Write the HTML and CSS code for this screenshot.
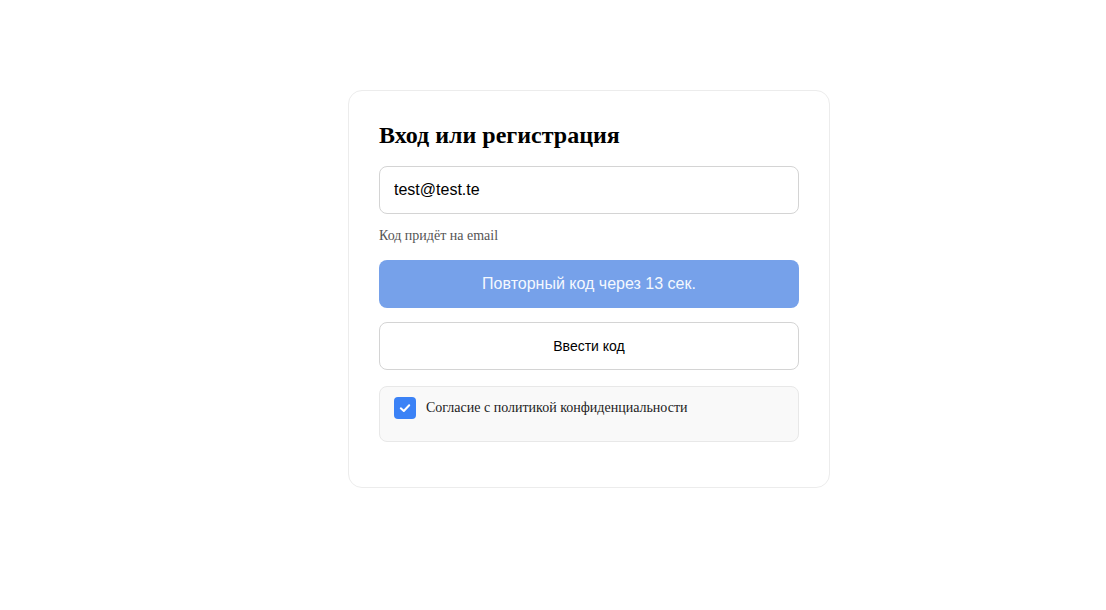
FILE: index.html
```html
<!DOCTYPE html>
<html lang="ru">
<head>
<meta charset="utf-8">
<link rel="stylesheet" href="styles.css">
</head>
<body>
<div class="page">
  <div class="card">
    <h1 class="title">Вход или регистрация</h1>
    <input class="field" type="text" value="test@test.te">
    <p class="hint">Код придёт на email</p>
    <button class="btn btn-primary" disabled>Повторный код через 13 сек.</button>
    <button class="btn btn-secondary">Ввести код</button>
    <label class="consent">
      <span class="check">
        <svg width="14" height="14" viewBox="0 0 14 14"><path d="M2.8 7.3 L5.8 10 L11.2 4.2" fill="none" stroke="#fff" stroke-width="2" stroke-linecap="round" stroke-linejoin="round"/></svg>
      </span>
      <span class="consent-text">Согласие с политикой конфиденциальности</span>
    </label>
  </div>
</div>
</body>
</html>
```

FILE: styles.css
```css
html, body {
  margin: 0;
  padding: 0;
  background: #ffffff;
}

.page {
  padding: 90px 0 0 348px;
}

.card {
  width: 420px;
  padding: 30px;
  border: 1px solid #ececec;
  border-radius: 14px;
  background: #fff;
  font-family: "Liberation Serif", "Times New Roman", serif;
  display: flex;
  flex-direction: column;
}

.title {
  margin: 0 0 17px;
  font-size: 24px;
  font-weight: bold;
  line-height: 28px;
  color: #000;
}

.field {
  box-sizing: border-box;
  width: 420px;
  height: 48px;
  margin: 0;
  padding: 0 14px;
  border: 1px solid #d4d4d4;
  border-radius: 8px;
  font-family: "Liberation Sans", Arial, sans-serif;
  font-size: 16px;
  color: #000;
  outline: none;
}

.hint {
  margin: 14px 0 16px;
  font-size: 14px;
  line-height: 16px;
  color: #555;
}

.btn {
  box-sizing: border-box;
  width: 420px;
  height: 48px;
  margin: 0;
  border-radius: 8px;
  font-family: "Liberation Sans", Arial, sans-serif;
  cursor: pointer;
}

.btn-primary {
  border: none;
  background: #76a1ea;
  color: #f4f8fe;
  font-size: 16px;
}

.btn-secondary {
  margin-top: 14px;
  border: 1px solid #d4d4d4;
  background: #fff;
  color: #000;
  font-size: 14px;
}

.consent {
  box-sizing: border-box;
  margin: 16px 0 15px;
  height: 56px;
  padding: 10px 14px;
  border: 1px solid #e8e8e8;
  border-radius: 8px;
  background: #f9f9f9;
  display: flex;
  align-items: flex-start;
  gap: 10px;
}

.check {
  width: 22px;
  height: 22px;
  border-radius: 4px;
  background: #3b82f6;
  display: flex;
  align-items: center;
  justify-content: center;
  flex: none;
}

.consent-text {
  font-size: 14px;
  line-height: 22px;
  color: #222;
}
```
